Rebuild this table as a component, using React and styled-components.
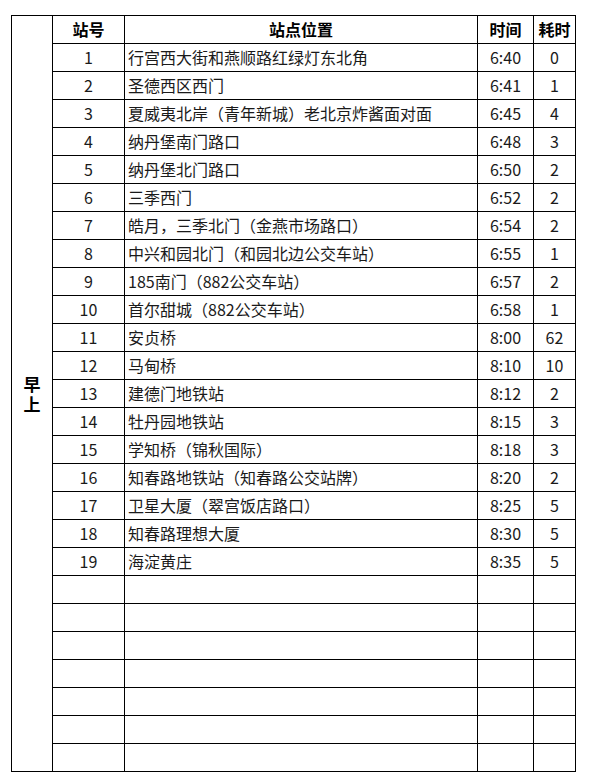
import styled, { createGlobalStyle } from "styled-components";

const stops = [
  ["1", "行宫西大街和燕顺路红绿灯东北角", "6:40", "0"],
  ["2", "圣德西区西门", "6:41", "1"],
  ["3", "夏威夷北岸（青年新城）老北京炸酱面对面", "6:45", "4"],
  ["4", "纳丹堡南门路口", "6:48", "3"],
  ["5", "纳丹堡北门路口", "6:50", "2"],
  ["6", "三季西门", "6:52", "2"],
  ["7", "皓月，三季北门（金燕市场路口）", "6:54", "2"],
  ["8", "中兴和园北门（和园北边公交车站）", "6:55", "1"],
  ["9", "185南门（882公交车站）", "6:57", "2"],
  ["10", "首尔甜城（882公交车站）", "6:58", "1"],
  ["11", "安贞桥", "8:00", "62"],
  ["12", "马甸桥", "8:10", "10"],
  ["13", "建德门地铁站", "8:12", "2"],
  ["14", "牡丹园地铁站", "8:15", "3"],
  ["15", "学知桥（锦秋国际）", "8:18", "3"],
  ["16", "知春路地铁站（知春路公交站牌）", "8:20", "2"],
  ["17", "卫星大厦（翠宫饭店路口）", "8:25", "5"],
  ["18", "知春路理想大厦", "8:30", "5"],
  ["19", "海淀黄庄", "8:35", "5"],
];

const emptyRows = 7;

const GlobalStyle = createGlobalStyle`
  html, body {
    margin: 0;
    background: #fff;
  }
  body {
    font-family: "Noto Sans CJK SC", "Noto Sans", sans-serif;
    color: #111;
  }
  #root {
    padding: 15px 0 0 11px;
  }
`;

export default function App() {
  return (
    <>
      <GlobalStyle />
      <Table lang="zh-CN">
        <colgroup>
          <col style={{ width: 41 }} />
          <col style={{ width: 72 }} />
          <col style={{ width: 353 }} />
          <col style={{ width: 56 }} />
          <col style={{ width: 42 }} />
        </colgroup>
        <tbody>
          <Row>
            <PeriodCell rowSpan={stops.length + emptyRows + 1}>
              <PeriodLabel>早上</PeriodLabel>
            </PeriodCell>
            <HeadCell>站号</HeadCell>
            <HeadCell>站点位置</HeadCell>
            <HeadCell>时间</HeadCell>
            <HeadCell>耗时</HeadCell>
          </Row>
          {stops.map(([no, place, time, cost]) => (
            <Row key={no}>
              <Cell>{no}</Cell>
              <Cell $left>{place}</Cell>
              <Cell>{time}</Cell>
              <Cell>{cost}</Cell>
            </Row>
          ))}
          {Array.from({ length: emptyRows }, (_, i) => (
            <Row key={"e" + i}>
              <Cell />
              <Cell />
              <Cell />
              <Cell />
            </Row>
          ))}
        </tbody>
      </Table>
    </>
  );
}

const Table = styled.table`
  border-collapse: collapse;
  table-layout: fixed;
  width: 565px;
  border: 1px solid #000;
`;

const Row = styled.tr`
  height: 28px;
`;

const Cell = styled.td`
  border: 1px solid #000;
  padding: ${({ $left }) => ($left ? "0 0 0 3px" : "0")};
  text-align: ${({ $left }) => ($left ? "left" : "center")};
  font-size: 16px;
  line-height: 27px;
  white-space: nowrap;
  overflow: hidden;
  color: #1a1a1a;
  text-spacing-trim: space-all;
`;

const HeadCell = styled(Cell)`
  font-weight: bold;
  color: #000;
`;

const PeriodCell = styled.td`
  border: 1px solid #000;
  text-align: center;
  vertical-align: middle;
  padding: 0;
`;

const PeriodLabel = styled.div`
  width: 1em;
  margin: 0 auto;
  font-size: 17px;
  line-height: 20px;
  font-weight: bold;
  color: #000;
  white-space: normal;
`;
